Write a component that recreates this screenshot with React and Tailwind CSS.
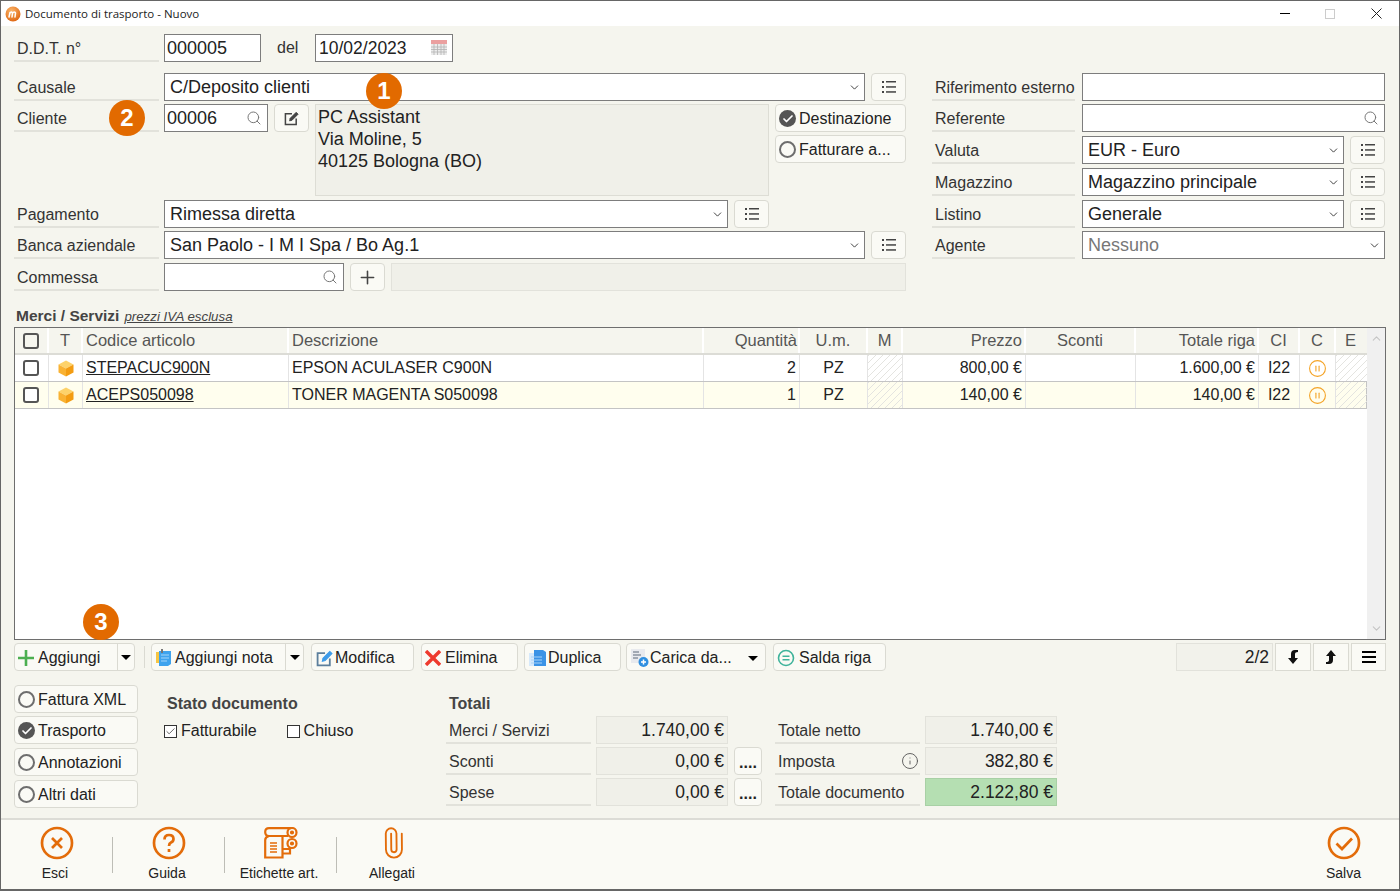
import React from "react";
import { Search, ChevronDown, CirclePause, Paperclip, Plus, Info, Check } from "lucide-react";

const COLS = "grid grid-cols-[34px_34px_206px_415px_96px_68px_35px_123px_110px_123px_41px_36px_31px]";
const HATCH = "bg-[repeating-linear-gradient(135deg,#e4e4e0_0,#e4e4e0_1px,transparent_1px,transparent_5px)]";

const rows = [
  { code: "STEPACUC900N", desc: "EPSON ACULASER C900N", qty: "2", price: "800,00 €", total: "1.600,00 €", bg: "bg-white" },
  { code: "ACEPS050098", desc: "TONER MAGENTA S050098", qty: "1", price: "140,00 €", total: "140,00 €", bg: "bg-[#fffeee]" },
];

const Logo = () => (
  <svg width="16" height="16" viewBox="0 0 16 16" className="shrink-0">
    <defs>
      <radialGradient id="lg" cx="0.4" cy="0.3" r="0.8">
        <stop offset="0" stopColor="#fbb56a" />
        <stop offset="1" stopColor="#dc5f08" />
      </radialGradient>
    </defs>
    <circle cx="8" cy="8" r="7.5" fill="url(#lg)" />
    <path d="M4 11 L5 6.5 M5 7 Q7 5 7.5 7 L7 11 M7.5 7 Q10 5 10.5 7 L10 11" stroke="#fff" strokeWidth="1.5" fill="none" strokeLinecap="round" />
  </svg>
);

const ListIcon = () => (
  <svg width="14" height="14" viewBox="0 0 14 14" fill="#444">
    <rect x="0" y="1" width="2" height="2" />
    <rect x="4" y="1" width="10" height="1.5" />
    <rect x="0" y="6" width="2" height="2" />
    <rect x="4" y="6.2" width="10" height="1.5" />
    <rect x="0" y="11" width="2" height="2" />
    <rect x="4" y="11.2" width="10" height="1.5" />
  </svg>
);

const CalendarIcon = () => (
  <svg width="16" height="16" viewBox="0 0 16 16">
    <rect x="0" y="0" width="16" height="4" fill="#eba0a0" />
    <rect x="0" y="4" width="16" height="11" fill="#ececec" />
    <path d="M0 7H16M0 9.5H16M0 12H16M3 4V15M6.5 4V15M10 4V15M13 4V15" stroke="#b4b4b4" strokeWidth="0.8" />
  </svg>
);

const Cube = () => (
  <svg width="16" height="17" viewBox="0 0 16 17">
    <path d="M8 0.5 L15.5 4.5 L8 8.5 L0.5 4.5Z" fill="#fdd26a" />
    <path d="M0.5 4.5 L8 8.5 V16.5 L0.5 12.5Z" fill="#f9b233" />
    <path d="M15.5 4.5 L8 8.5 V16.5 L15.5 12.5Z" fill="#f39c12" />
  </svg>
);

const NoteIcon = () => (
  <svg width="16" height="18" viewBox="0 0 16 18">
    <rect x="0" y="3" width="8" height="11" fill="#f6c644" />
    <path d="M3 2 H15 V15 L12 17 H3Z" fill="#3fa3ee" />
    <path d="M5 6H13M5 9H13M5 12H11" stroke="#a6d6fa" strokeWidth="1" />
    <rect x="5" y="0" width="2" height="4" fill="#777" />
  </svg>
);

const EditIcon = ({ box, pen, size, width }) => (
  <svg width={size} height={size} viewBox="0 0 16 16" fill="none" stroke={box} strokeWidth={width}>
    <path d="M8.5 3 H1.5 V14.5 H13 V8" />
    <path d="M6 10.5 L6.6 7.8 L13 1.4 L15 3.4 L8.6 9.8Z" fill={pen} stroke={pen} strokeWidth="1" />
  </svg>
);

const DuplicaIcon = () => (
  <svg width="17" height="16" viewBox="0 0 17 16">
    <rect x="0" y="3" width="11" height="13" fill="#d6e9fb" />
    <path d="M5 0 H14 L17 2 V16 H5Z" fill="#3b93e6" />
    <path d="M2 7H13M2 10H13M2 13H13" stroke="#a8d2f7" strokeWidth="1" />
  </svg>
);

const CaricaIcon = () => (
  <svg width="18" height="19" viewBox="0 0 18 19">
    <rect x="0" y="0" width="14" height="14" fill="#e8eaee" />
    <path d="M2 3H8M2 6H10M2 9H7" stroke="#8a94a0" strokeWidth="1.3" />
    <circle cx="12.5" cy="13" r="5" fill="#2f8fe0" />
    <path d="M12.5 10.5V15.5M10 13H15" stroke="#fff" strokeWidth="1.5" />
  </svg>
);

const SaldaIcon = () => (
  <svg width="18" height="18" viewBox="0 0 18 18" fill="none" stroke="#3fb39b" strokeWidth="1.6">
    <circle cx="9" cy="9" r="7.5" />
    <path d="M5.5 7.3H12.5M5.5 10.7H12.5" />
  </svg>
);

const RedX = () => (
  <svg width="16" height="16" viewBox="0 0 16 16" stroke="#ee3a2e" strokeWidth="3.4">
    <path d="M1 1L15 15M15 1L1 15" />
  </svg>
);

const GreenPlus = () => (
  <svg width="16" height="16" viewBox="0 0 16 16" stroke="#4caf50" strokeWidth="2.6">
    <path d="M8 0V16M0 8H16" />
  </svg>
);

const Caret = () => <span className="w-0 h-0 border-x-[5px] border-x-transparent border-t-[5px] border-t-black" />;

const RoundIcon = ({ children }) => (
  <svg width="34" height="34" viewBox="0 0 34 34" fill="none" stroke="#e36c0a" strokeWidth="2.7">
    <circle cx="17" cy="17" r="15" />
    {children}
  </svg>
);

const LabelPrinter = () => (
  <svg width="34" height="32" viewBox="0 0 34 32" fill="none" stroke="#e36c0a" strokeWidth="2.2">
    <path d="M27 1.2 H5 Q1.2 1.2 1.2 5 Q1.2 9 5 9 H24" />
    <circle cx="28" cy="5.5" r="4.5" />
    <circle cx="28" cy="5.5" r="1" fill="#e36c0a" />
    <circle cx="28" cy="16.5" r="4.5" />
    <circle cx="28" cy="16.5" r="1" fill="#e36c0a" />
    <path d="M5 9 Q1.2 10 1.2 13 V30.5 H18.5 V9" />
    <path d="M18.5 22 H26 V26.5 H18.5" />
    <path d="M6 16H13M6 19H13M6 22H13M6 25H13" strokeWidth="1.4" />
  </svg>
);

const Label = ({ children, className = "w-[145px]" }) => (
  <div className={`${className} h-[28px] shrink-0 border-b-2 border-[#e2e2db] pl-[3px] pt-[4px] flex items-center text-[16px] text-[#333] whitespace-nowrap`}>
    {children}
  </div>
);

const Box = ({ className = "", children, muted }) => (
  <div className={`${className} h-[28px] shrink-0 border border-[#7d7d7d] bg-white flex items-center text-[18px] whitespace-nowrap ${muted ? "text-[#777]" : "text-[#222]"}`}>
    {children}
  </div>
);

const Select = ({ className, value, muted }) => (
  <Box className={`${className} pl-[5px] pr-[3px] justify-between`} muted={muted}>
    <span>{value}</span>
    <ChevronDown size={13} strokeWidth={1.7} className="text-[#333]" />
  </Box>
);

const Btn = ({ className = "", children }) => (
  <div className={`${className} h-[28px] shrink-0 border border-[#dadad2] rounded-[4px] bg-[#fafaf5] flex items-center text-[16px] text-[#222] whitespace-nowrap`}>
    {children}
  </div>
);

const ListBtn = () => (
  <Btn className="w-[35px] justify-center ml-[6px]">
    <ListIcon />
  </Btn>
);

const Radio = ({ checked }) =>
  checked ? (
    <span className="w-[17px] h-[17px] rounded-full bg-[#555] flex items-center justify-center shrink-0">
      <Check size={12} strokeWidth={3.5} className="text-white" />
    </span>
  ) : (
    <span className="w-[17px] h-[17px] rounded-full border-2 border-[#6e6e6e] shrink-0" />
  );

const RadioBtn = ({ checked, children, className = "w-[124px]" }) => (
  <Btn className={`${className} pl-[3px] pt-[1px] gap-[3px]`}>
    <Radio checked={checked} />
    <span className="pt-[1px]">{children}</span>
  </Btn>
);

const Total = ({ label, value, extra, green }) => (
  <>
    <Label className="w-[145px] justify-between">
      {label}
      {extra}
    </Label>
    <div className={`w-[132px] h-[28px] ml-[5px] border flex items-center justify-end pr-[3px] text-[17.5px] text-[#222] ${green ? "bg-[#b5dfb2] border-[#a8d0a5]" : "bg-[#f0f0e9] border-[#e2e2db]"}`}>
      {value}
    </div>
  </>
);

const Dots = () => (
  <Btn className="w-[28px] justify-center items-end pb-[3px] font-bold text-[14px] leading-none ml-[6px]">....</Btn>
);

const FooterBtn = ({ icon, label, className = "", labelClass = "pr-[3px]" }) => (
  <div className={`${className} w-[111px] flex flex-col items-center`}>
    <div className="h-[36px] mt-[5px] flex items-center justify-center">{icon}</div>
    <span className={`${labelClass} mt-[2px] text-[14px] text-[#222]`}>{label}</span>
  </div>
);

const Sep = () => <div className="w-px h-[36px] bg-[#bdbdb6] mt-[17px] shrink-0" />;

const Badge = ({ n, className }) => (
  <div className={`${className} absolute w-[36px] h-[36px] rounded-full bg-[#e26a00] text-white text-[24px] font-bold flex items-center justify-center`}>
    {n}
  </div>
);

export default function App() {
  return (
    <div className="relative w-[1400px] h-[891px] flex flex-col border-x border-t border-b-2 border-[#666] bg-[#f5f5ee] font-['Liberation_Sans',Arial,sans-serif] overflow-hidden">
      {/* title bar */}
      <div className="h-[25px] bg-white flex items-center pl-[4px] shrink-0">
        <Logo />
        <span className="ml-[4px] text-[11.5px] text-[#222] font-['Open_Sans',sans-serif]">Documento di trasporto - Nuovo</span>
        <div className="ml-auto flex items-center">
          <div className="w-[10px] h-px bg-black mr-[35px]" />
          <div className="w-[10px] h-[10px] border border-[#ccc] mr-[36px]" />
          <svg width="11" height="11" viewBox="0 0 11 11" stroke="#222" strokeWidth="1" className="mr-[17px]">
            <path d="M0.5 0.5L10.5 10.5M10.5 0.5L0.5 10.5" />
          </svg>
        </div>
      </div>

      <div className="flex-1 pl-[13px] pt-[8px] min-h-0">
        {/* numero e data */}
        <div className="flex items-center">
          <Label>D.D.T. n°</Label>
          <Box className="w-[97px] ml-[5px] pl-[2px]">000005</Box>
          <span className="ml-[16px] w-[38px] text-[16px] text-[#333]">del</span>
          <Box className="w-[138px] pl-[3px] pr-[5px] justify-between">
            <span className="text-[17.5px]">10/02/2023</span>
            <CalendarIcon />
          </Box>
        </div>

        <div className="flex mt-[11px]">
          {/* colonna sinistra */}
          <div className="w-[893px] shrink-0">
            <div className="flex">
              <Label>Causale</Label>
              <Select className="w-[701px] ml-[5px]" value="C/Deposito clienti" />
              <ListBtn />
            </div>
            <div className="flex mt-[3px]">
              <Label>Cliente</Label>
              <Box className="w-[104px] ml-[5px] pl-[2px] pr-[5px] justify-between">
                00006
                <Search size={16} strokeWidth={1.5} className="text-[#777]" />
              </Box>
              <Btn className="w-[35px] ml-[6px] justify-center">
                <EditIcon box="#444" pen="#444" size={15} width={1.6} />
              </Btn>
              <div className="w-[454px] h-[92px] ml-[6px] border border-[#ddddd5] bg-[#f0f0e9] pl-[2px] pt-[1px] text-[18px] leading-[22px] text-[#222]">
                PC Assistant
                <br />
                Via Moline, 5
                <br />
                40125 Bologna (BO)
              </div>
              <div className="ml-[6px] flex flex-col gap-[3px]">
                <RadioBtn checked className="w-[131px]">Destinazione</RadioBtn>
                <RadioBtn className="w-[131px]">Fatturare a...</RadioBtn>
              </div>
            </div>
            <div className="flex mt-[4px]">
              <Label>Pagamento</Label>
              <Select className="w-[564px] ml-[5px]" value="Rimessa diretta" />
              <ListBtn />
            </div>
            <div className="flex mt-[3px]">
              <Label>Banca aziendale</Label>
              <Select className="w-[701px] ml-[5px]" value="San Paolo - I M I Spa / Bo Ag.1" />
              <ListBtn />
            </div>
            <div className="flex mt-[4px]">
              <Label>Commessa</Label>
              <Box className="w-[180px] ml-[5px] pr-[5px] justify-end">
                <Search size={16} strokeWidth={1.5} className="text-[#777]" />
              </Box>
              <Btn className="w-[35px] ml-[6px] justify-center">
                <Plus size={21} strokeWidth={1.8} className="text-[#444]" />
              </Btn>
              <div className="w-[515px] h-[28px] ml-[6px] border border-[#e2e2db] bg-[#f0f0e9]" />
            </div>
          </div>

          {/* colonna destra */}
          <div className="ml-[25px] w-[453px] shrink-0">
            <div className="flex">
              <Label className="w-[143px]">Riferimento esterno</Label>
              <Box className="w-[303px] ml-[7px]" />
            </div>
            <div className="flex mt-[3px]">
              <Label className="w-[143px]">Referente</Label>
              <Box className="w-[303px] ml-[7px] pr-[5px] justify-end">
                <Search size={16} strokeWidth={1.5} className="text-[#777]" />
              </Box>
            </div>
            <div className="flex mt-[4px]">
              <Label className="w-[143px]">Valuta</Label>
              <Select className="w-[262px] ml-[7px]" value="EUR - Euro" />
              <ListBtn />
            </div>
            <div className="flex mt-[4px]">
              <Label className="w-[143px]">Magazzino</Label>
              <Select className="w-[262px] ml-[7px]" value="Magazzino principale" />
              <ListBtn />
            </div>
            <div className="flex mt-[4px]">
              <Label className="w-[143px]">Listino</Label>
              <Select className="w-[262px] ml-[7px]" value="Generale" />
              <ListBtn />
            </div>
            <div className="flex mt-[3px]">
              <Label className="w-[143px]">Agente</Label>
              <Select className="w-[303px] ml-[7px]" value="Nessuno" muted />
            </div>
          </div>
        </div>

        {/* righe documento */}
        <div className="mt-[14px] h-[22px] pl-[2px] flex items-center">
          <span className="text-[15.5px] font-bold text-[#444]">Merci / Servizi</span>
          <span className="ml-[5px] mt-[1px] text-[13.3px] italic underline text-[#444]">prezzi IVA esclusa</span>
        </div>
        <div className="w-[1372px] h-[313px] border border-[#6e6e6e] bg-white flex">
          <div className="w-[1352px] shrink-0">
            <div className={`${COLS} h-[27px] bg-[#f5f5ee] border-b-2 border-[#dcdcd6] text-[16.5px] text-[#555]`}>
              <div className="flex items-center justify-center border-r-2 border-white">
                <span className="w-[16px] h-[16px] border-2 border-[#555] rounded-[3px]" />
              </div>
              <div className="flex items-center justify-center border-r-2 border-white">T</div>
              <div className="flex items-center pl-[3px] border-r-2 border-white">Codice articolo</div>
              <div className="flex items-center pl-[3px] border-r-2 border-white">Descrizione</div>
              <div className="flex items-center justify-end pr-[1px] border-r-2 border-white">Quantità</div>
              <div className="flex items-center justify-center border-r-2 border-white">U.m.</div>
              <div className="flex items-center justify-center border-r-2 border-white">M</div>
              <div className="flex items-center justify-end pr-[2px] border-r-2 border-white">Prezzo</div>
              <div className="flex items-center justify-center border-r-2 border-white">Sconti</div>
              <div className="flex items-center justify-end pr-[2px] border-r-2 border-white">Totale riga</div>
              <div className="flex items-center justify-center border-r-2 border-white">CI</div>
              <div className="flex items-center justify-center border-r-2 border-white">C</div>
              <div className="flex items-center justify-center pr-[2px]">E</div>
            </div>
            {rows.map((r, i) => (
              <div key={r.code} className={`${COLS} ${r.bg} h-[27px] text-[16px] text-[#222] border-b border-[#c4c4c4] ${i === 1 ? "border-r" : ""}`}>
                <div className="flex items-center justify-center pr-[1px] border-r border-[#e4e4e4]">
                  <span className="w-[16px] h-[16px] border-2 border-[#555] rounded-[3px] bg-white" />
                </div>
                <div className="flex items-center justify-center border-r border-[#e4e4e4]">
                  <Cube />
                </div>
                <div className="flex items-center pl-[3px] underline border-r border-[#e4e4e4]">{r.code}</div>
                <div className="flex items-center pl-[3px] border-r border-[#e4e4e4]">{r.desc}</div>
                <div className="flex items-center justify-end pr-[3px] border-r border-[#e4e4e4]">{r.qty}</div>
                <div className="flex items-center justify-center border-r border-[#e4e4e4]">PZ</div>
                <div className={`border-r border-[#e4e4e4] ${HATCH}`} />
                <div className="flex items-center justify-end pr-[3px] border-r border-[#e4e4e4]">{r.price}</div>
                <div className="border-r border-[#e4e4e4]" />
                <div className="flex items-center justify-end pr-[3px] border-r border-[#e4e4e4]">{r.total}</div>
                <div className="flex items-center justify-center border-r border-[#e4e4e4]">I22</div>
                <div className="flex items-center justify-center border-r border-[#e4e4e4]">
                  <CirclePause size={19} strokeWidth={1.4} className="text-[#f4a428]" />
                </div>
                <div className={HATCH} />
              </div>
            ))}
          </div>
          <div className="w-[18px] bg-[#f0f0f0] flex flex-col justify-between items-center py-[4px]">
            <ChevronDown size={13} strokeWidth={2} className="text-[#c4c4c4] rotate-180" />
            <ChevronDown size={13} strokeWidth={2} className="text-[#c4c4c4]" />
          </div>
        </div>

        {/* barra pulsanti */}
        <div className="flex mt-[3px] h-[28px]">
          <Btn className="w-[121px]">
            <span className="w-[103px] h-full flex items-center pl-[3px] pt-[2px] gap-[4px] border-r border-[#dadad2]">
              <GreenPlus />
              Aggiungi
            </span>
            <span className="flex-1 flex justify-center"><Caret /></span>
          </Btn>
          <div className="w-px h-[22px] mt-[3px] ml-[9px] bg-[#dadad2]" />
          <Btn className="w-[153px] ml-[6px]">
            <span className="w-[134px] h-full flex items-center pl-[4px] pt-[2px] gap-[3px] border-r border-[#dadad2]">
              <NoteIcon />
              Aggiungi nota
            </span>
            <span className="flex-1 flex justify-center"><Caret /></span>
          </Btn>
          <Btn className="w-[103px] ml-[7px] pl-[4px] pt-[2px] gap-[2px]">
            <EditIcon box="#5c7f9c" pen="#3d9be9" size={17} width={1.7} />
            Modifica
          </Btn>
          <Btn className="w-[97px] ml-[7px] pl-[3px] pt-[2px] gap-[4px]">
            <RedX />
            Elimina
          </Btn>
          <Btn className="w-[97px] ml-[6px] pl-[4px] pt-[2px] gap-[2px]">
            <DuplicaIcon />
            Duplica
          </Btn>
          <Btn className="w-[140px] ml-[5px] pl-[4px] pr-[7px] pt-[2px] gap-[1px]">
            <CaricaIcon />
            Carica da...
            <span className="ml-auto flex"><Caret /></span>
          </Btn>
          <Btn className="w-[113px] ml-[7px] pl-[3px] pt-[2px] gap-[4px]">
            <SaldaIcon />
            Salda riga
          </Btn>
          <div className="w-[97px] h-[28px] ml-[290px] border border-[#e2e2db] bg-[#f2f2eb] flex items-center justify-end pr-[3px] text-[17.5px] text-[#222]">
            2/2
          </div>
          <div className="w-[36px] h-[28px] ml-[2px] border border-[#dadad2] bg-[#fafaf5] flex items-center justify-center">
            <svg width="12" height="14" viewBox="0 0 12 14" fill="#111">
              <path d="M11 0 H8 Q4 0 4 4 V8 H1 L6 14 L11 8 H8 V4 Q8 2 11 2Z" />
            </svg>
          </div>
          <div className="w-[36px] h-[28px] ml-[2px] border border-[#dadad2] bg-[#fafaf5] flex items-center justify-center">
            <svg width="12" height="14" viewBox="0 0 12 14" fill="#111">
              <path d="M1 14 H4 Q8 14 8 10 V6 H11 L6 0 L1 6 H4 V10 Q4 12 1 12Z" />
            </svg>
          </div>
          <div className="w-[35px] h-[28px] ml-[2px] border border-[#dadad2] bg-[#fafaf5] flex flex-col items-center justify-center gap-[3px]">
            <span className="w-[14px] h-[2px] bg-black" />
            <span className="w-[14px] h-[2px] bg-black" />
            <span className="w-[14px] h-[2px] bg-black" />
          </div>
        </div>

        {/* sezioni e totali */}
        <div className="flex mt-[14px]">
          <div className="w-[124px] flex flex-col gap-[4px] shrink-0">
            <div className="-mb-[1px]"><RadioBtn>Fattura XML</RadioBtn></div>
            <RadioBtn checked>Trasporto</RadioBtn>
            <RadioBtn>Annotazioni</RadioBtn>
            <RadioBtn>Altri dati</RadioBtn>
          </div>
          <div className="w-[282px] ml-[26px] shrink-0">
            <div className="pl-[3px] mt-[10px] text-[16px] font-bold text-[#444] leading-[18px]">Stato documento</div>
            <div className="flex items-center mt-[6px] text-[16px] text-[#222]">
              <span className="w-[13px] h-[13px] border border-[#333] bg-white flex items-center justify-center">
                <Check size={11} strokeWidth={1.6} className="text-[#333]" />
              </span>
              <span className="ml-[4px]">Fatturabile</span>
              <span className="w-[13px] h-[13px] ml-[30px] border border-[#333] bg-white" />
              <span className="ml-[4px]">Chiuso</span>
            </div>
          </div>
          <div>
            <div className="pl-[3px] mt-[10px] h-[21px] text-[16px] font-bold text-[#444] leading-[18px]">Totali</div>
            <div className="grid grid-cols-[145px_137px_34px_13px_145px_137px] gap-y-[3px] w-[611px]">
              <Total label="Merci / Servizi" value="1.740,00 €" />
              <div />
              <div />
              <Total label="Totale netto" value="1.740,00 €" />
              <Total label="Sconti" value="0,00 €" />
              <Dots />
              <div />
              <Total label="Imposta" value="382,80 €" extra={<Info size={18} strokeWidth={1.2} className="text-[#555] mr-[1px] -mt-[3px]" />} />
              <Total label="Spese" value="0,00 €" />
              <Dots />
              <div />
              <Total label="Totale documento" value="2.122,80 €" green />
            </div>
          </div>
        </div>
      </div>

      {/* barra azioni */}
      <div className="h-[71px] shrink-0 border-t-2 border-[#dcdcd6] bg-[#fafaf5] flex">
        <FooterBtn icon={<RoundIcon><path d="M12 12L22 22M22 12L12 22" /></RoundIcon>} label="Esci" />
        <Sep />
        <FooterBtn
          icon={
            <RoundIcon>
              <path d="M12.5 13.5 Q12.5 9 17 9 Q21.5 9 21.5 13 Q21.5 15.5 19 16.5 Q17 17.5 17 20" />
              <path d="M17 23V26" />
            </RoundIcon>
          }
          label="Guida"
        />
        <Sep />
        <FooterBtn icon={<LabelPrinter />} label="Etichette art." />
        <Sep />
        <FooterBtn icon={<Paperclip size={32} strokeWidth={1.4} className="-rotate-45 text-[#e36c0a]" />} label="Allegati" labelClass="pr-[1px]" />
        <FooterBtn className="ml-auto" icon={<RoundIcon><path d="M9.5 17.5L15 23L25 12.5" /></RoundIcon>} label="Salva" labelClass="" />
      </div>

      <Badge n="1" className="left-[365px] top-[72px]" />
      <Badge n="2" className="left-[108px] top-[99px]" />
      <Badge n="3" className="left-[82px] top-[603px]" />
    </div>
  );
}
